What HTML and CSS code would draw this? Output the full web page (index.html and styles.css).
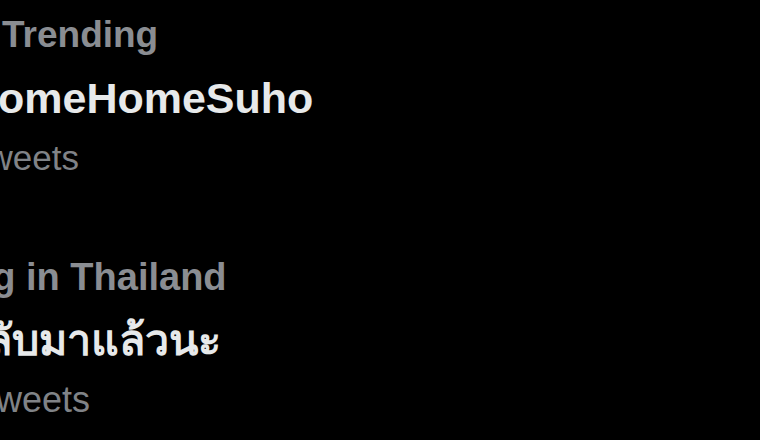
FILE: index.html
```html
<!DOCTYPE html>
<html lang="en">

<head>
    <meta charset="UTF-8">
    <meta name="viewport" content="width=device-width, initial-scale=1.0">
    <title>Trends</title>
    <link rel="stylesheet" href="styles.css">
</head>

<body>
    <div class="trends">
        <div class="trend first">
            <div class="trend-meta shift-a">Trending</div>
            <div class="trend-name shift-b">#HomeHomeSuho</div>
            <div class="trend-count shift-c">Tweets</div>
        </div>
        <div class="trend second">
            <div class="trend-meta shift-d">Trending in Thailand</div>
            <div class="trend-name shift-e">กลับมาแล้วนะ</div>
            <div class="trend-count shift-f">Tweets</div>
        </div>
    </div>
</body>
</html>
```

FILE: styles.css
```css
/* Global styles */
* {
    box-sizing: border-box;
    margin: 0;
    padding: 0;
}

html,
body {
    background-color: #000000;
    width: 100%;
    height: 100%;
    overflow: hidden;
}

body {
    font-family: "Liberation Sans", Arial, "Noto Sans", sans-serif;
}

/* List of trends */
.trends {
    display: flex;
    flex-direction: column;
    gap: 68px;
    padding-top: 7px;
}

.trend {
    white-space: nowrap;
}

.trend-meta {
    color: #8a8d92;
    font-size: 37px;
    font-weight: bold;
    line-height: 56px;
}

.second .trend-meta {
    font-size: 38px;
}

.trend-name {
    color: #e7e9ea;
    font-size: 43px;
    font-weight: bold;
    line-height: 71px;
}

.trend-count {
    color: #808387;
    font-size: 35px;
    line-height: 47px;
}

.second .trend-count {
    font-size: 36px;
}

/* left edge of the crop cuts into each line */
.shift-a {
    margin-left: 2px;
}

.shift-b {
    margin-left: -57px;
}

.shift-c {
    margin-left: -32px;
}

.shift-d {
    margin-left: -145px;
}

.shift-e {
    margin-left: -40px;
}

.shift-f {
    margin-left: -24px;
}
```
